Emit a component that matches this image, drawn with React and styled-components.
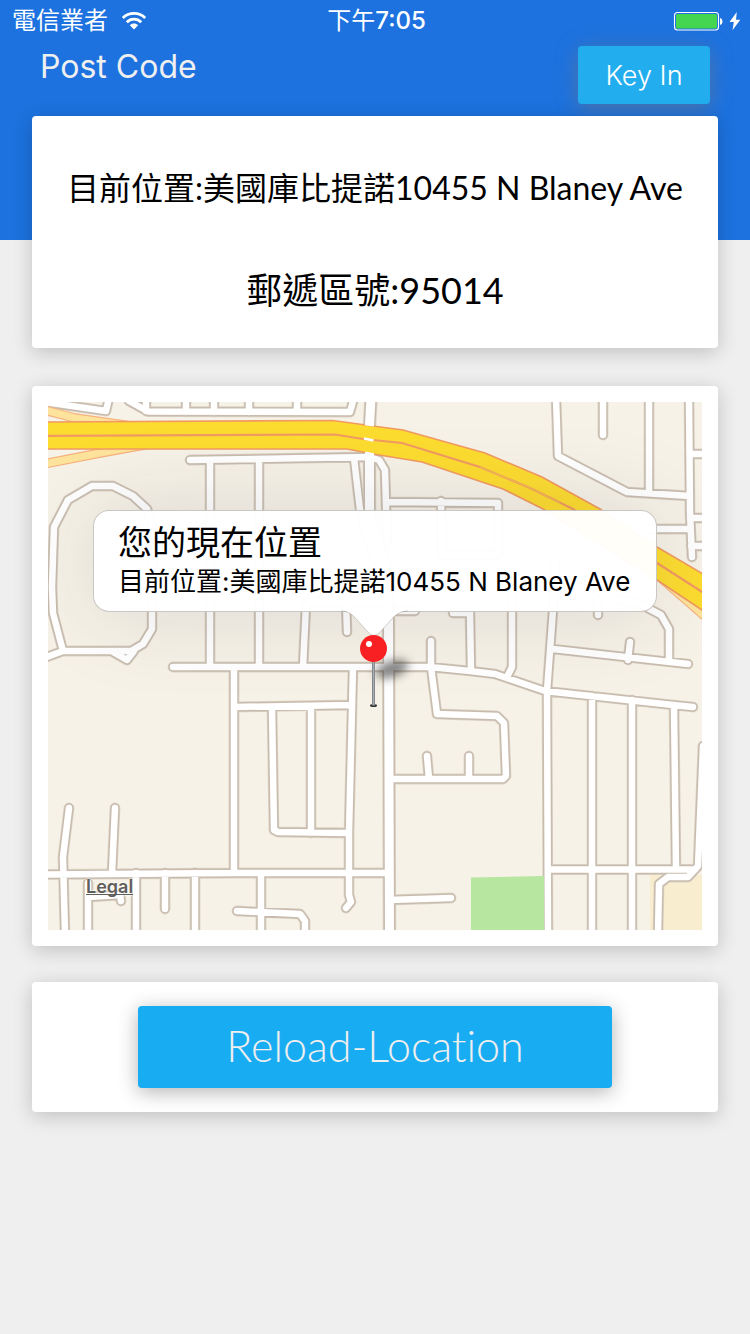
import React from 'react';
import styled, { createGlobalStyle } from 'styled-components';

const systemFont = `Inter, "Noto Sans CJK TC", sans-serif`;
const humanistFont = `Lato, "Noto Sans CJK TC", sans-serif`;

const GlobalStyle = createGlobalStyle`
  *, *::before, *::after { box-sizing: border-box; }
  body { margin: 0; background: #efefef; font-family: ${systemFont}; color: #000; }
  h1, p { margin: 0; font-weight: 400; }
`;

const Page = styled.div`
  min-height: 100vh;
  background: linear-gradient(#1d72df 240px, #efefef 240px);
`;

const StatusBar = styled.div`
  display: grid;
  grid-template-columns: 1fr auto 1fr;
  align-items: center;
  height: 40px;
  padding: 0 9px 0 12px;
  color: #fff;
  font-size: 24px;
  line-height: 42px;
`;

const StatusGroup = styled.div`
  display: flex;
  align-items: center;
  justify-content: ${(p) => (p.$end ? 'flex-end' : 'flex-start')};
  gap: ${(p) => (p.$end ? '6px' : '13px')};
`;

const Clock = styled.time`
  font-weight: 500;
`;

const Cjk = styled.span`
  font-weight: 400;
`;

const Header = styled.header`
  display: flex;
  justify-content: space-between;
  align-items: flex-start;
  height: 76px;
  padding: 6px 40px 0;
`;

const Title = styled.h1`
  color: #efefef;
  font-size: 32px;
  line-height: 42px;
`;

const Button = styled.button`
  border: 0;
  border-radius: 4px;
  cursor: pointer;
  padding: 0;
`;

const KeyInButton = styled(Button)`
  width: 132px;
  height: 58px;
  background: #22adee;
  color: #fff;
  font-family: ${systemFont};
  font-size: 27px;
  font-weight: 300;
  box-shadow: 0 4px 20px rgba(120, 120, 120, 0.55);
`;

const ReloadButton = styled(Button)`
  width: 474px;
  max-width: 100%;
  height: 82px;
  padding-bottom: 4px;
  background: #18acf2;
  color: #efefef;
  font-family: ${humanistFont};
  font-size: 43px;
  font-weight: 300;
  font-variant-ligatures: none;
  box-shadow: 0 4px 20px rgba(0, 0, 0, 0.3);
`;

const Main = styled.main`
  padding: 0 32px 40px;
`;

const Card = styled.section`
  position: relative;
  background: #fff;
  border-radius: 4px;
  box-shadow: 0 4px 20px rgba(0, 0, 0, 0.2);
`;

const AddressCard = styled(Card)`
  display: flex;
  flex-direction: column;
  align-items: center;
  gap: 52px;
  height: 232px;
  padding-top: 47px;
  font-family: ${humanistFont};
`;

const MapCard = styled(Card)`
  margin-top: 38px;
  padding: 16px;
`;

const ActionCard = styled(Card)`
  display: flex;
  justify-content: center;
  margin-top: 36px;
  padding: 24px;
`;

const Address = styled.p`
  font-size: 32px;
  line-height: 50px;
  white-space: nowrap;
`;

const PostCode = styled.p`
  font-size: 36px;
  line-height: 50px;
`;

const MapView = styled.div`
  position: relative;
  height: 528px;
  overflow: hidden;
  background: #f6f2e7;
`;

const MapDrawing = styled.svg`
  display: block;
  width: 100%;
  height: 100%;
`;

const Annotation = styled.div`
  position: absolute;
  top: 108px;
  left: 50%;
  transform: translateX(-50%);
  display: flex;
  flex-direction: column;
  align-items: center;
`;

const Callout = styled.div`
  width: 564px;
  height: 102px;
  padding: 13px 24px 0;
  border: 1px solid rgba(120, 115, 105, 0.4);
  border-radius: 16px;
  background: rgba(255, 255, 255, 0.97);
  box-shadow: 0 0 90px rgba(40, 40, 60, 0.13);
  white-space: nowrap;
`;

const CalloutTitle = styled.p`
  font-size: 34px;
  line-height: 38px;
`;

const CalloutText = styled.p`
  font-size: 26px;
  line-height: 40px;
`;

const PinDrawing = styled.svg`
  display: block;
  margin-top: -2px;
`;

const LegalLink = styled.a`
  position: absolute;
  left: 38px;
  bottom: 32px;
  color: #605e5b;
  font-size: 18px;
  font-weight: 600;
  line-height: 22px;
  text-decoration: underline;
  text-decoration-skip-ink: none;
  text-shadow: 0 0 2px #fff, 0 0 2px #fff;
`;

const WifiIcon = () => (
  <svg width="26" height="20" viewBox="0 0 26 20" aria-label="Wi-Fi">
    <g fill="none" stroke="#fff" strokeWidth="2.800">
      <path d="M1.800 6.900C8 .8 18 .8 24.200 6.900" />
      <path d="M5.800 11.200c4-4 10.400-4 14.400 0" />
    </g>
    <path d="M8.800 14.300c2.400-2.300 6-2.300 8.400 0L13 18.600z" fill="#fff" />
  </svg>
);

const BatteryIcon = () => (
  <svg width="50" height="20" viewBox="0 0 50 20" aria-label="Battery">
    <rect x="1.500" y="1.500" width="44" height="17.500" rx="3" fill="none" stroke="#fff" strokeWidth="1.100" />
    <rect x="3" y="3" width="41" height="14.500" rx="1.500" fill="#44d651" />
    <path d="M47 7c3.300.6 3.300 6.400 0 7z" fill="#fff" />
  </svg>
);

const BoltIcon = () => (
  <svg width="12" height="20" viewBox="0 0 12 20" aria-label="Charging">
    <path d="M7.800 1L.5 11h4.300L3.500 19.300 11.300 8.800H7z" fill="#fff" />
  </svg>
);

const streets = [
  'M44 402L106 411L109 398',
  'M129 401L148 411.500L350 412L354 398',
  'M146 398V411M186 398V412M214 398V412M249 398V412M297 398V412',
  'M190 460L369 457',
  'M210 460V667M259 460V667',
  'M354 458L360 510L375 560',
  'M369 457L379 460L385 470L387 540',
  'M308 602L306 605L303 667M308 602H389',
  'M346 602L347 632',
  'M52 587L54 527L68 500L92 486H113L133 496L147 509L154 530L152 585V629L143 644L131 651H63L53 613Z',
  'M44 658L63 651M113 652L127 660L134 651',
  'M173 667H430L470 671L495 674L545 691L673 705L693 707',
  'M234 667V873',
  'M353 667L349 833V895L351 902L346 908',
  'M234 707L351 705',
  'M272 707L274 830L278 832L349 833M311 706V833',
  'M44 874.500L234 873H389',
  'M69 808L63 857L65 934M115 808L112 873',
  'M88 883V934M88 897L120 895L121 901',
  'M136 873V934M165 873V909M195 873V934M261 873V934',
  'M237 911L300 914L305 921V934',
  'M431 641V667L437 714L497 716L504 723L506 776L503 779H389',
  'M427 756L429 779M469 756V779',
  'M389 900L451 898',
  'M389 611H415M453 613H470L471 671',
  'M512 590V667L507 677',
  'M555 560L553 610L547 691L548 934',
  'M553 649L688 664M630 642L628 660M598 600V615',
  'M620 600L640 604L661 615L669 629V661',
  'M592 696V934M632 700V934M674 705L676 869',
  'M548 869.500H695',
  'M703 746L698 866L688 877H668L659 884L658 934',
  'M556 398L558 456L627 492L690 496',
  'M603 398V435M649 398V492',
  'M689 398L690 513L692 557',
  'M690 454H706M690 518H706M691 546H706M650 529H689',
  'M389 502L498 503V555H442L441 501',
].join('');

const avenue = 'M371 398L369.500 425V515L386 570L388.500 620L389.500 934';
const ramps = 'M44 410L75 418L145 428M44 464L100 453L150 444M662 579L708 619';
const carriageway =
  'M40 422L333 420.500L373 426L403 430L485 453L542 477L600 509L657 547L710 578V616L702 610L657 580L543 509L503 489L422 462L373 454L347 449H40Z';
const median =
  'M40 436L335 434.500L363 439L402 443L480 467L530 488L573 509L657 563L710 597';

const StreetMap = () => (
  <MapDrawing viewBox="48 402 654 528" preserveAspectRatio="xMidYMid slice" aria-hidden="true">
    <path d="M650 875H710V940H650Z" fill="#f8edcf" />
    <g fill="none" strokeLinecap="round" strokeLinejoin="round">
      <path d={streets} stroke="#ddd4c7" strokeWidth="10.800" />
      <path d={avenue} stroke="#ddd4c7" strokeWidth="13.500" />
      <path d={streets} stroke="#c8bcae" strokeWidth="9.500" />
      <path d={avenue} stroke="#c8bcae" strokeWidth="12" />
    </g>
    <path d="M471 877.500L544 876V934H471Z" fill="#b6e6a0" />
    <g fill="none" stroke="#fff" strokeLinecap="round" strokeLinejoin="round">
      <path d={streets} strokeWidth="6.500" />
      <path d={avenue} strokeWidth="9" />
    </g>
    <g fill="none" strokeLinejoin="round">
      <path d={ramps} stroke="#f7b27c" strokeWidth="9.500" />
      <path d={ramps} stroke="#fee39d" strokeWidth="7.300" />
    </g>
    <path d={carriageway} fill="#fddc30" stroke="#f19a62" strokeWidth="1.600" />
    <path d={median} fill="none" stroke="#f19a62" strokeWidth="2.200" />
    <path d="M480 467L530 488L560 503" fill="none" stroke="#f7c24c" strokeWidth="1" />
    <path d="M364 438.500L373.500 440.500" stroke="#fff" strokeWidth="2.800" />
    <path d="M365 424L374 425.400M365 452.800L374 454.500" stroke="#fff" strokeWidth="2.400" />
  </MapDrawing>
);

const Pin = () => (
  <PinDrawing width="120" height="98" viewBox="315 610 120 98" role="img" aria-label="Pin">
    <defs>
      <filter id="soft" x="-50%" y="-80%" width="200%" height="260%">
        <feGaussianBlur stdDeviation="5" />
      </filter>
      <linearGradient id="needle">
        <stop offset="0" stopColor="#70757a" />
        <stop offset=".5" stopColor="#a8adb2" />
        <stop offset="1" stopColor="#74787c" />
      </linearGradient>
    </defs>
    <ellipse cx="392" cy="669" rx="17" ry="8" fill="#333" opacity=".6" filter="url(#soft)" transform="rotate(-18 392 669)" />
    <path
      d="M341 610C349 611 354 616 358 621L367 631Q374 640 381 631L391 620C396 614 401 611 408 610Z"
      fill="#fff"
    />
    <path
      d="M341 611C349 611 354 616 358 621L367 631Q374 640 381 631L391 620C396 614 401 611 408 611"
      fill="none"
      stroke="#8a857c"
      strokeOpacity=".45"
      strokeWidth=".8"
    />
    <ellipse cx="373.500" cy="705.500" rx="3.500" ry="1.500" fill="#333" />
    <path d="M372 660H375V705.500H372Z" fill="url(#needle)" />
    <circle cx="373.500" cy="648.500" r="13.500" fill="#f92024" />
    <circle cx="369" cy="644" r="3" fill="#fff" />
  </PinDrawing>
);

export default function App() {
  return (
    <>
      <GlobalStyle />
      <Page>
        <StatusBar>
          <StatusGroup>
            <span>電信業者</span>
            <WifiIcon />
          </StatusGroup>
          <Clock><Cjk>下午</Cjk>7:05</Clock>
          <StatusGroup $end>
            <BatteryIcon />
            <BoltIcon />
          </StatusGroup>
        </StatusBar>
        <Header>
          <Title>Post Code</Title>
          <KeyInButton type="button">Key In</KeyInButton>
        </Header>
        <Main>
          <AddressCard>
            <Address>目前位置:美國庫比提諾10455 N Blaney Ave</Address>
            <PostCode>郵遞區號:95014</PostCode>
          </AddressCard>
          <MapCard>
            <MapView>
              <StreetMap />
              <LegalLink href="#legal">Legal</LegalLink>
              <Annotation>
                <Callout>
                  <CalloutTitle>您的現在位置</CalloutTitle>
                  <CalloutText>目前位置:美國庫比提諾10455 N Blaney Ave</CalloutText>
                </Callout>
                <Pin />
              </Annotation>
            </MapView>
          </MapCard>
          <ActionCard>
            <ReloadButton type="button">Reload-Location</ReloadButton>
          </ActionCard>
        </Main>
      </Page>
    </>
  );
}
